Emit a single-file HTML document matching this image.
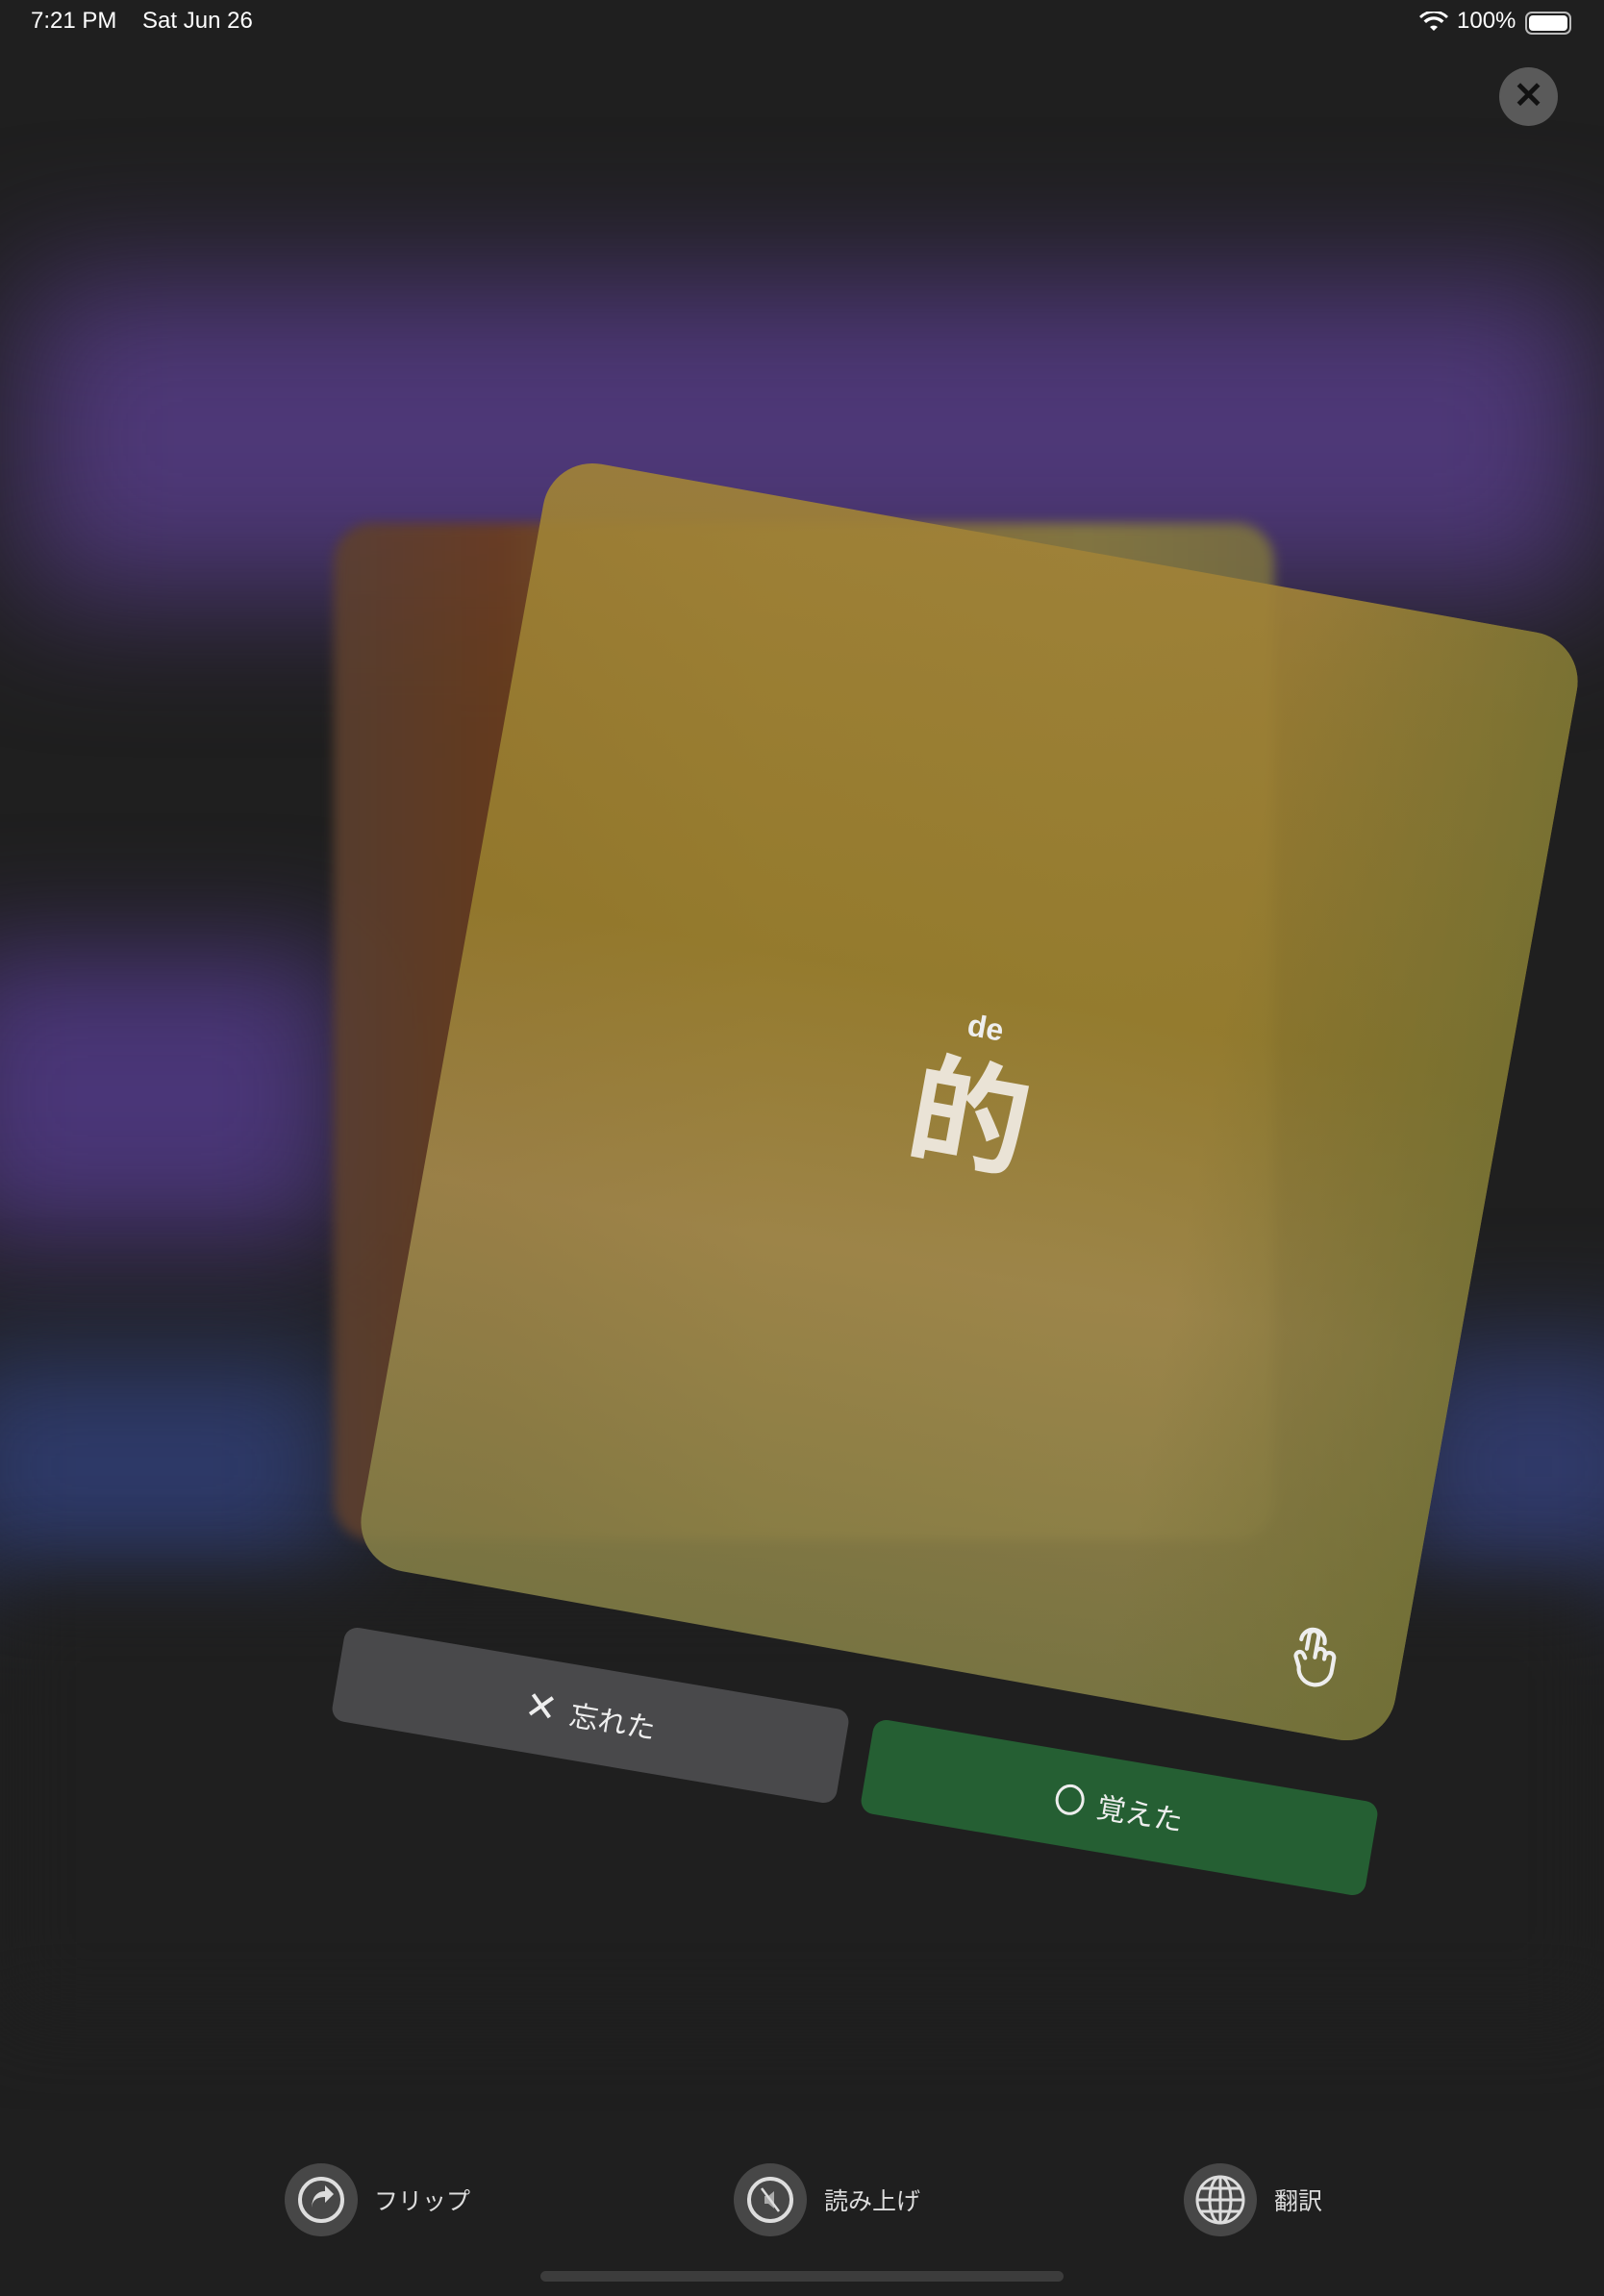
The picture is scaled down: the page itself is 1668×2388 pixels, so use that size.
<!DOCTYPE html>
<html><head><meta charset="utf-8"><style>
*{margin:0;padding:0;box-sizing:border-box}
body{width:1668px;height:2388px;background:#1f1f1f;overflow:hidden;position:relative;font-family:"Liberation Sans","Noto Sans CJK JP",sans-serif;color:#fff}
.b{position:absolute;filter:blur(60px)}
.r{position:absolute;transform:translate(-50%,-50%) rotate(10.2deg)}
.st{position:absolute;top:8px;font-size:24px;color:#fff}
.tb{position:absolute;top:2250px;width:76px;height:76px;border-radius:50%;background:#474747;display:flex;align-items:center;justify-content:center}
.tl{position:absolute;top:2270px;font-size:25px;color:#ddd}
</style></head><body>
<div class="b" style="left:20px;top:290px;width:1640px;height:330px;background:#4e3878;filter:blur(70px)"></div>
<div class="b" style="left:-60px;top:990px;width:420px;height:300px;background:#4a3678"></div>
<div class="b" style="left:-60px;top:1410px;width:420px;height:230px;background:#2e3a6a"></div>
<div class="b" style="left:1450px;top:1400px;width:300px;height:250px;background:#303a6a"></div>
<div class="b" style="left:0px;top:1650px;width:1668px;height:450px;background:#1f1f1f;filter:blur(40px)"></div>
<div style="position:absolute;left:347px;top:544px;width:978px;height:1058px;border-radius:40px;background:linear-gradient(90deg,#5c4030 0%,#6c3e1e 18%,#8e6f2e 45%,#887c3e 80%,#7a7040 100%);filter:blur(6px);opacity:.9"></div>
<div class="r" style="left:1008px;top:1146px;width:1092px;height:1170px;border-radius:52px;overflow:hidden;background:linear-gradient(180deg,rgba(160,130,55,.92) 0%,rgba(150,124,45,.92) 40%,rgba(160,135,75,.9) 65%,rgba(130,125,70,.9) 100%)">
<div style="position:absolute;right:0;top:0;width:300px;height:100%;background:linear-gradient(90deg,rgba(110,110,50,0),rgba(110,110,50,.7))"></div>
<div style="position:absolute;left:6px;right:0;top:488px;text-align:center;font-size:32px;font-weight:bold;color:#eee">de</div>
<div style="position:absolute;left:6px;right:0;top:528px;text-align:center;font-size:124px;font-weight:bold;color:#eae3d6;font-family:'Noto Sans CJK JP',sans-serif;line-height:1">的</div>
<svg style="position:absolute;left:972px;top:1058px" width="60" height="64" viewBox="0 0 24 26" fill="none" stroke="#eee" stroke-width="1.7" stroke-linecap="round" stroke-linejoin="round"><path d="M8 10V4a2 2 0 0 1 4 0v9M12 11a2 2 0 0 1 4 0v2M16 12a2 2 0 0 1 4 0v5a7 7 0 0 1-14 1l-2-4a1.7 1.7 0 0 1 3-1.5L8 14"/><path d="M5 6.5a5 5 0 0 1 10 0"/></svg>
</div>
<div class="r" style="left:614px;top:1784px;width:532px;height:99px;border-radius:14px;background:#49494b;transform:translate(-50%,-50%) rotate(9.6deg);display:flex;align-items:center;justify-content:center;font-size:30px;color:#eee;gap:14px"><span style="font-size:40px;font-weight:300">✕</span>忘れた</div>
<div class="r" style="left:1164px;top:1880px;width:532px;height:99px;border-radius:14px;background:#255f33;transform:translate(-50%,-50%) rotate(9.6deg);display:flex;align-items:center;justify-content:center;font-size:30px;color:#eee;gap:14px"><span style="display:inline-block;width:30px;height:32px;border:3px solid #eee;border-radius:50%"></span>覚えた</div>
<div class="st" style="left:32px">7:21 PM&nbsp;&nbsp;&nbsp; Sat Jun 26</div>
<div class="st" style="left:1515px">100%</div>
<svg style="position:absolute;left:1476px;top:12px" width="30" height="22" viewBox="0 0 30 22"><path d="M15 20l4-4a6 6 0 0 0-8 0zM7 12a11 11 0 0 1 16 0l2.5-2.5a15 15 0 0 0-21 0zM2 7a18 18 0 0 1 26 0l2-2a21 21 0 0 0-30 0z" fill="#fff"/></svg>
<div style="position:absolute;left:1586px;top:12px;width:48px;height:24px;border:2px solid #bbb;border-radius:7px;padding:2px"><div style="width:100%;height:100%;background:#fff;border-radius:4px"></div></div>
<div style="position:absolute;left:1559px;top:70px;width:61px;height:61px;border-radius:50%;background:#5a5a5a;color:#111;font-size:38px;text-align:center;line-height:60px;font-weight:bold">✕</div>
<div class="tb" style="left:296px"><svg width="52" height="52" viewBox="0 0 52 52"><circle cx="26" cy="26" r="22" fill="none" stroke="#ddd" stroke-width="4"/><path d="M16 36c0-10 6-13 14-13v6l9-9-9-9v6c-9 0-14 7-14 19z" fill="#ddd"/></svg></div>
<div class="tl" style="left:389px">フリップ</div>
<div class="tb" style="left:763px"><svg width="52" height="52" viewBox="0 0 52 52"><circle cx="26" cy="26" r="22" fill="none" stroke="#ddd" stroke-width="4"/><path d="M20 22h4l6-5v18l-6-5h-4z" fill="#aaa"/><path d="M17 14l18 24" stroke="#ddd" stroke-width="2.5"/></svg></div>
<div class="tl" style="left:857px">読み上げ</div>
<div class="tb" style="left:1231px"><svg width="56" height="56" viewBox="0 0 56 56" fill="none" stroke="#ddd" stroke-width="3"><circle cx="28" cy="28" r="24"/><ellipse cx="28" cy="28" rx="11" ry="24"/><path d="M28 4v48M4 28h48M8 16h40M8 40h40"/></svg></div>
<div class="tl" style="left:1325px">翻訳</div>
<div style="position:absolute;left:562px;top:2362px;width:544px;height:11px;border-radius:6px;background:#3c3c3c"></div>
</body></html>
